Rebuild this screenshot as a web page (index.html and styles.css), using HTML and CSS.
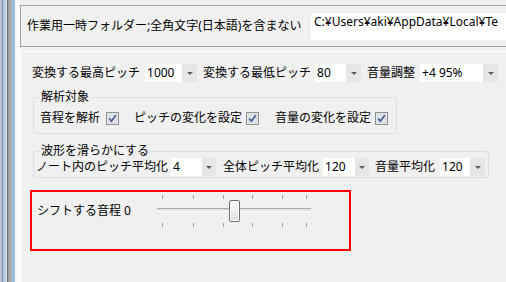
FILE: index.html
```html
<!DOCTYPE html>
<html lang="ja">
<head>
    <meta charset="UTF-8">
    <meta name="viewport" content="width=device-width, initial-scale=1.0">
    <title>設定</title>
    <link rel="stylesheet" href="styles.css">
</head>
<body>
    <div class="window">
        <!-- Window frame on the left -->
        <div class="frame">
            <span class="band b1"></span>
            <span class="band b2"></span>
            <span class="band b3"></span>
            <span class="band b4"></span>
            <span class="band b5"></span>
            <span class="band b6"></span>
            <span class="band b7"></span>
            <span class="band b8"></span>
        </div>

        <div class="main">
            <!-- Temp folder -->
            <div class="folder-panel">
                <span class="folder-label">作業用一時フォルダー;全角文字(日本語)を含まない</span>
                <div class="folder-box">C:¥Users¥aki¥AppData¥Local¥Te</div>
            </div>

            <div class="settings">
                <div class="row pitch-row">
                    <span class="label">変換する最高ピッチ</span>
                    <div class="combo gap-5"><span class="value w37">1000</span><span class="arrow"></span></div>
                    <span class="label gap-6">変換する最低ピッチ</span>
                    <div class="combo gap-4"><span class="value w31">80</span><span class="arrow"></span></div>
                    <span class="label gap-6">音量調整</span>
                    <div class="combo gap-5"><span class="value w63">+4 95%</span><span class="arrow"></span></div>
                </div>

                <fieldset class="group target-group">
                    <legend>解析対象</legend>
                    <div class="row">
                        <span class="label">音程を解析</span>
                        <span class="check gap-6"><svg width="13" height="13" viewBox="0 0 13 13"><rect x="0.5" y="0.5" width="12" height="12" fill="#f4f4f4" stroke="#8e8f8f"/><rect x="2" y="2" width="9" height="9" fill="#dfe4ea" stroke="#c3cad3" stroke-width="0.6"/><path d="M3.2 6.4 L5.4 9.2 L9.8 3.2" fill="none" stroke="#4a5e92" stroke-width="1.7"/></svg></span>
                        <span class="label gap-15">ピッチの変化を設定</span>
                        <span class="check gap-4"><svg width="13" height="13" viewBox="0 0 13 13"><rect x="0.5" y="0.5" width="12" height="12" fill="#f4f4f4" stroke="#8e8f8f"/><rect x="2" y="2" width="9" height="9" fill="#dfe4ea" stroke="#c3cad3" stroke-width="0.6"/><path d="M3.2 6.4 L5.4 9.2 L9.8 3.2" fill="none" stroke="#4a5e92" stroke-width="1.7"/></svg></span>
                        <span class="label gap-16">音量の変化を設定</span>
                        <span class="check gap-4"><svg width="13" height="13" viewBox="0 0 13 13"><rect x="0.5" y="0.5" width="12" height="12" fill="#f4f4f4" stroke="#8e8f8f"/><rect x="2" y="2" width="9" height="9" fill="#dfe4ea" stroke="#c3cad3" stroke-width="0.6"/><path d="M3.2 6.4 L5.4 9.2 L9.8 3.2" fill="none" stroke="#4a5e92" stroke-width="1.7"/></svg></span>
                    </div>
                </fieldset>

                <fieldset class="group smooth-group">
                    <legend>波形を滑らかにする</legend>
                    <div class="row">
                        <span class="label">ノート内のピッチ平均化</span>
                        <div class="combo gap-3"><span class="value w31">4</span><span class="arrow narrow"></span></div>
                        <span class="label gap-7">全体ピッチ平均化</span>
                        <div class="combo gap-4"><span class="value w32">120</span><span class="arrow narrow"></span></div>
                        <span class="label gap-6">音量平均化</span>
                        <div class="combo gap-5"><span class="value w30">120</span><span class="arrow"></span></div>
                    </div>
                </fieldset>

                <!-- Shift slider (highlighted) -->
                <div class="shift-box">
                    <span class="shift-label">シフトする音程 0</span>
                    <div class="slider">
                        <span class="tick top" style="left: 5px"></span>
                        <span class="tick top" style="left: 36px"></span>
                        <span class="tick top" style="left: 66px"></span>
                        <span class="tick top" style="left: 95px"></span>
                        <span class="tick top" style="left: 125px"></span>
                        <span class="tick top" style="left: 149px"></span>
                        <span class="track"></span>
                        <span class="thumb"></span>
                        <span class="tick bottom" style="left: 5px"></span>
                        <span class="tick bottom" style="left: 36px"></span>
                        <span class="tick bottom" style="left: 66px"></span>
                        <span class="tick bottom" style="left: 95px"></span>
                        <span class="tick bottom" style="left: 125px"></span>
                        <span class="tick bottom" style="left: 149px"></span>
                    </div>
                </div>
            </div>
        </div>
    </div>
</body>
</html>
```

FILE: styles.css
```css
* {
    margin: 0;
    padding: 0;
    box-sizing: border-box;
}

body {
    font-family: 'Noto Sans', 'Noto Sans CJK JP', sans-serif;
    font-size: 12px;
    color: #000000;
    background: #f0f0f0;
    width: 506px;
    height: 282px;
    overflow: hidden;
}

.window {
    display: flex;
    height: 282px;
}

/* left window frame */
.frame {
    display: flex;
    width: 20px;
    flex-shrink: 0;
}

.band {
    display: block;
    height: 100%;
}

.b1 { width: 2px; background: #b4c4d6; }
.b2 { width: 1px; background: #7d8a99; }
.b3 { width: 3px; background: #b6cce4; }
.b4 { width: 1px; background: #dde6f0; }
.b5 { width: 1px; background: #6e6e6e; }
.b6 { width: 4px; background: linear-gradient(90deg, #9a9a9a, #b8b8b8); }
.b7 { width: 3px; background: #9dbbe0; }
.b8 { width: 5px; background: #fafafa; }

.main {
    flex: 1;
    min-width: 0;
    display: flex;
    flex-direction: column;
}

/* temp folder panel */
.folder-panel {
    display: flex;
    align-items: center;
    height: 42px;
    margin-top: 5px;
    padding-left: 6px;
    border: 1px solid #a0a0a0;
    border-right: none;
}

.folder-label {
    line-height: 16px;
    white-space: nowrap;
    width: 284px;
    flex-shrink: 0;
}

.folder-box {
    flex: 1;
    height: 27px;
    background: #ffffff;
    padding: 2px 0 0 3px;
    line-height: 14px;
    white-space: nowrap;
    overflow: hidden;
}

/* main settings */
.settings {
    flex: 1;
    margin-top: 4px;
    border-top: 1px solid #ffffff;
    border-left: 1px solid #ffffff;
    padding: 12px 0 0 9px;
}

.row {
    display: flex;
    align-items: center;
    height: 18px;
    white-space: nowrap;
}

.pitch-row {
    margin-left: 2px;
}

.label {
    line-height: 14px;
}

.combo {
    display: flex;
    height: 18px;
}

.combo .value {
    background: #ffffff;
    line-height: 18px;
    padding-left: 2px;
    overflow: hidden;
}

.combo .arrow {
    width: 15px;
    background: #e6e6e6;
    position: relative;
}

.combo .arrow.narrow {
    width: 14px;
}

.combo .arrow::after {
    content: '';
    position: absolute;
    left: 50%;
    top: 8px;
    margin-left: -3px;
    border-left: 3px solid transparent;
    border-right: 3px solid transparent;
    border-top: 3px solid #5c5c5c;
}

.w30 { width: 30px; }
.w31 { width: 31px; }
.w32 { width: 32px; }
.w37 { width: 37px; }
.w63 { width: 63px; }

.gap-3 { margin-left: 3px; }
.gap-4 { margin-left: 4px; }
.gap-5 { margin-left: 5px; }
.gap-6 { margin-left: 6px; }
.gap-7 { margin-left: 7px; }
.gap-15 { margin-left: 15px; }
.gap-16 { margin-left: 16px; }

.check {
    display: flex;
    width: 13px;
    height: 13px;
}

/* group boxes */
.group {
    border: 1px solid #d5dfe5;
    border-radius: 3px;
    margin-left: 3px;
}

.group legend {
    padding: 0 1px;
    white-space: nowrap;
}

.target-group {
    width: 364px;
    margin-top: 8px;
    padding: 5px 7px 6px 6px;
}

.target-group legend {
    line-height: 14px;
}

.smooth-group {
    width: 456px;
    margin-top: 11px;
    padding: 1px 2px 1px 2px;
}

.smooth-group legend {
    line-height: 12px;
    margin-left: 4px;
}

/* shift slider box */
.shift-box {
    display: flex;
    align-items: flex-start;
    width: 321px;
    height: 61px;
    margin-top: 12px;
    border: 2px solid #ff0000;
    padding: 3px 0 0 5px;
}

.shift-label {
    width: 120px;
    margin-top: 8px;
    line-height: 16px;
    white-space: nowrap;
}

.slider {
    position: relative;
    width: 154px;
    height: 32px;
}

.tick {
    position: absolute;
    width: 1px;
    height: 4px;
    background: #a0a0a0;
}

.tick.top {
    top: 0;
}

.tick.bottom {
    top: 28px;
}

.track {
    position: absolute;
    left: 0;
    right: 0;
    top: 13px;
    height: 4px;
    background: #e4e4e4;
    border-top: 1px solid #a9a9a9;
    border-bottom: 1px solid #ffffff;
}

.thumb {
    position: absolute;
    left: 72px;
    top: 5px;
    width: 11px;
    height: 22px;
    border: 1px solid #707070;
    border-radius: 2px;
    background: linear-gradient(180deg, #fdfdfd 0%, #eeeeee 50%, #dcdcdc 100%);
    box-shadow: inset 0 0 0 1px #ffffff;
}
```
